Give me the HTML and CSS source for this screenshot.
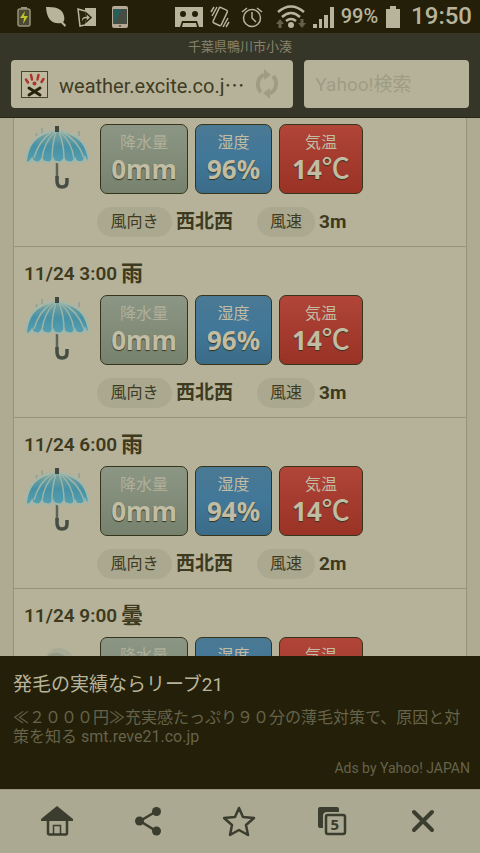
FILE: index.html
```
<!DOCTYPE html>
<html lang="ja">
<head>
<meta charset="utf-8">
<meta name="viewport" content="width=device-width, initial-scale=1">
<title>千葉県鴨川市小湊</title>
<link rel="stylesheet" href="styles.css">
</head>
<body>
<svg class="defs" aria-hidden="true">
  <defs>
    <linearGradient id="canopy" x1="0" y1="0" x2="0" y2="1">
      <stop offset="0" stop-color="#7fa49c"/><stop offset=".5" stop-color="#4791a6"/><stop offset="1" stop-color="#559fb0"/>
    </linearGradient>
    <symbol id="umbrella" viewBox="0 0 66 66">
      <path d="M18 9V4M55 12V7M12 12l1-3" stroke="#8ba098" stroke-width="1.500" fill="none"/>
      <path d="M33 34v21" fill="none" stroke="#5d6359" stroke-width="2.500"/>
      <path d="M33 52v5q0 6 5 6t5-5v-4" fill="none" stroke="#454d45" stroke-width="3.500"/>
      <path d="M2 37Q4 15 22 9q11-4 22 0 19 6 21 28-3 0-4-3-2 5-6 4-3 0-4-3-3 5-7 3-3 0-4-3-3 5-7 3-3 0-4-3-3 5-7 3-3 0-4-3-3 5-6 3-3 0-4-3-3 5-6 3z" fill="url(#canopy)" stroke="#a2b7aa" stroke-width="2"/>
      <path d="M28 8Q15 16 10 34M31 8Q20 18 18 35M32 8Q28 20 28 35M35 8Q40 20 40 35M36 8Q48 18 50 35M38 8Q54 16 60 34" fill="none" stroke="#98b4a8" stroke-width="1.500"/>
      <path d="M31 2h4v6h-4z" fill="#414840"/>
    </symbol>
    <symbol id="cloud" viewBox="0 0 66 66">
      <path d="M12 32q0-11 10-12 4-9 13-9 10 0 14 10 9 2 8 12-1 10-11 10H24q-12 0-12-11z" fill="#a9aa95"/>
      <path d="M20 27q2-12 14-11 9 1 10 12-14-6-24-1z" fill="#979a87"/>
    </symbol>
  </defs>
</svg>

<header class="top">
  <div class="status">
    <div class="status-left">
      <svg width="14" height="22" viewBox="0 0 14 22"><path d="M4 3V1h6v2" fill="#99957c"/><rect x="1" y="3" width="12" height="17" rx="2" fill="#4b4933" stroke="#99957c" stroke-width="1.500"/><path d="M8 5l-5 7h4l-1 6 5-8H7z" fill="#bfc42b"/></svg>
      <svg width="22" height="22" viewBox="0 0 22 22"><path d="M1 1q16-1 18 9 1 5-1 6l3 3-1 2-4-4Q2 19 1 1z" fill="#b8b49b"/></svg>
      <svg width="20" height="22" viewBox="0 0 20 22"><path d="M8 2h11v18H8z" fill="#b8b49b"/><path d="M8 5l-7-2 2 17 5-1" fill="#29250c" stroke="#b8b49b" stroke-width="1.500"/><path d="M4 15q0-5 5-5V7l5 4.500-5 4.500v-3q-3 0-3 3z" fill="#b8b49b" stroke="#29250c" stroke-width="1.500"/></svg>
      <svg width="18" height="24" viewBox="0 0 18 24"><rect x="1" y="1" width="16" height="22" rx="2" fill="#b6a995"/><path d="M2 4h14v15H2z" fill="#454c42"/><path d="M3 19L11 4H2v15z" fill="#285d59"/><circle cx="9" cy="21" r="1" fill="#514c3e"/></svg>
    </div>
    <div class="status-right">
      <svg width="28" height="20" viewBox="0 0 28 20"><path d="M0 0h28v20h-4l-2-6H7l-2 6H0z" fill="#b8b49b"/><path d="M7 20l1-4h13l1 4z" fill="#b8b49b"/><circle cx="8" cy="7" r="3" fill="#242008"/><circle cx="20" cy="7" r="3" fill="#242008"/></svg>
      <svg width="20" height="24" viewBox="0 0 20 24"><g fill="none" stroke="#b8b49b" stroke-width="1.500"><rect x="5.500" y="3" width="9" height="17" rx="1.500" transform="rotate(25 10 12)"/><path d="M7 2L2 11M4 2L1 7M13 22l5-9M16 22l3-5"/></g></svg>
      <svg class="alarm" width="22" height="22" viewBox="0 0 22 22"><g fill="none" stroke="#b8b49b" stroke-width="1.500"><circle cx="11" cy="12" r="8.500"/><path d="M11 6v6l4 4M1 6l5-4M21 6l-5-4"/></g></svg>
      <svg class="wifi" width="30" height="24" viewBox="0 0 30 24"><g fill="none" stroke="#b8b49b" stroke-width="2.500"><path d="M2 7q13-11 26 0M6 12q9-8 18 0M10 16q5-4 10 0"/></g><circle cx="15" cy="20" r="3" fill="#b8b49b"/><path d="M4 14l4 5H5.500v4h-3v-4H0zM26 23l4-5h-2.500v-4h-3v4H22z" fill="#64604a"/></svg>
      <svg width="21" height="22" viewBox="0 0 21 22"><path d="M0 18h4v4H0zM6 13h3v9H6zM11 9h4v13h-4zM17 1h4v21h-4z" fill="#b8b49b"/></svg>
      <span class="percent">99%</span>
      <svg width="16" height="24" viewBox="0 0 16 24"><path d="M5 1h6v3h4v19H1V4h4z" fill="#b8b49b"/></svg>
      <span class="clock">19:50</span>
    </div>
  </div>
  <div class="page-title">千葉県鴨川市小湊</div>
  <div class="bars">
    <div class="url-bar">
      <svg width="27" height="27" viewBox="0 0 27 27"><rect x=".5" y=".5" width="26" height="26" fill="#bfb99f" stroke="#47462b"/><path d="M5 8.500l2 3M10 4l1 4.500M17.500 4l-1 4.500M22.500 8l-2 3" stroke="#ab352b" stroke-width="2.500" stroke-linecap="round"/><circle cx="13.500" cy="12.500" r="2" fill="#ab352b"/><path d="M8 17l11 7M19 17L8 24" stroke="#27240c" stroke-width="3" stroke-linecap="round"/></svg>
      <input class="url" type="text" aria-label="URL" value="weather.excite.co.j⋯">
      <button class="reload" type="button" aria-label="再読み込み"><svg width="26" height="32" viewBox="0 0 26 32"><g fill="none" stroke="#9f9c84" stroke-width="4"><path d="M7 24A11 11 0 0 1 10 6.500"/><path d="M19 8A11 11 0 0 1 16 25.500"/></g><path d="M10 1l7 6-7 5zM16 31l-7-6 7-5z" fill="#9f9c84"/></svg></button>
    </div>
    <input class="search" type="search" aria-label="Yahoo!検索" placeholder="Yahoo!検索">
  </div>
</header>

<main class="page">
  <div class="list">
    <article class="entry first">
      <div class="detail"><svg class="sky"><use href="#umbrella"/></svg>
        <div class="cards"><div class="card rain"><span>降水量</span><b>0mm</b></div><div class="card humid"><span>湿度</span><b>96%</b></div><div class="card temp"><span>気温</span><b>14<i>℃</i></b></div></div></div>
      <div class="wind"><span class="pill dir">風向き</span><b class="from">西北西</b><span class="pill">風速</span><b>3m</b></div>
    </article>
    <article class="entry">
      <h2>11/24 3:00 <em>雨</em></h2>
      <div class="detail"><svg class="sky"><use href="#umbrella"/></svg>
        <div class="cards"><div class="card rain"><span>降水量</span><b>0mm</b></div><div class="card humid"><span>湿度</span><b>96%</b></div><div class="card temp"><span>気温</span><b>14<i>℃</i></b></div></div></div>
      <div class="wind"><span class="pill dir">風向き</span><b class="from">西北西</b><span class="pill">風速</span><b>3m</b></div>
    </article>
    <article class="entry">
      <h2>11/24 6:00 <em>雨</em></h2>
      <div class="detail"><svg class="sky"><use href="#umbrella"/></svg>
        <div class="cards"><div class="card rain"><span>降水量</span><b>0mm</b></div><div class="card humid"><span>湿度</span><b>94%</b></div><div class="card temp"><span>気温</span><b>14<i>℃</i></b></div></div></div>
      <div class="wind"><span class="pill dir">風向き</span><b class="from">西北西</b><span class="pill">風速</span><b>2m</b></div>
    </article>
    <article class="entry">
      <h2>11/24 9:00 <em>曇</em></h2>
      <div class="detail"><svg class="sky"><use href="#cloud"/></svg>
        <div class="cards"><div class="card rain"><span>降水量</span></div><div class="card humid"><span>湿度</span></div><div class="card temp"><span>気温</span></div></div></div>
    </article>
  </div>
</main>

<aside class="ad">
  <a href="#ad" class="ad-title">発毛の実績ならリーブ21</a>
  <p>≪２０００円≫充実感たっぷり９０分の薄毛対策で、原因と対策を知る smt.reve21.co.jp</p>
  <small>Ads by Yahoo! JAPAN</small>
</aside>

<nav class="tools">
  <button type="button" aria-label="ホーム"><svg width="34" height="34" viewBox="0 0 34 34"><path d="M17 1l16 13v2H1v-2z" fill="#3b3d2e"/><path d="M8 15v13q0 1.500 1.500 1.500h16q1.500 0 1.500-1.500V15" fill="none" stroke="#3b3d2e" stroke-width="2.500"/><path d="M13.500 29v-8.500h7V29" fill="none" stroke="#3b3d2e" stroke-width="1.500"/></svg></button>
  <button type="button" aria-label="共有"><svg width="28" height="32" viewBox="0 0 28 32"><path d="M22 5.500L6 15l16 10" fill="none" stroke="#3b3d2e" stroke-width="2.500"/><g fill="#3b3d2e"><circle cx="22.500" cy="5.500" r="4.500"/><circle cx="5.500" cy="15" r="4.500"/><circle cx="22.500" cy="25" r="4.500"/></g></svg></button>
  <button type="button" aria-label="お気に入り"><svg width="34" height="34" viewBox="0 0 34 34"><path d="M16 3l4 9 11 1-8 7 2 10-9-5-9 5 2-10-8-7 11-1z" fill="none" stroke="#3b3d2e" stroke-width="2.500" stroke-linejoin="round"/></svg></button>
  <button type="button" class="tabs" aria-label="タブ"><svg width="30" height="32" viewBox="0 0 30 32"><path d="M3 1h17q2 0 2 2v3H10q-4 0-4 4v12H3q-2 0-2-2V3q0-2 2-2z" fill="#3b3d2e"/><rect x="9" y="9" width="19" height="19" rx="2" fill="none" stroke="#3b3d2e" stroke-width="2.500"/></svg><span>5</span></button>
  <button type="button" aria-label="閉じる"><svg width="24" height="26" viewBox="0 0 24 26"><path d="M3 3l18 18M21 3L3 21" stroke="#3b3d2e" stroke-width="4" stroke-linecap="round"/></svg></button>
</nav>
</body>
</html>
```
FILE: styles.css
```
* { box-sizing: border-box; }
body {
  margin: 0;
  height: 100vh;
  display: flex;
  flex-direction: column;
  overflow: hidden;
  background: #b5b299;
  color: #3d3a20;
  font-family: Roboto, "Noto Sans CJK JP", sans-serif;
}
svg { display: block; flex: none; }
button, input { border: 0; padding: 0; margin: 0; background: none; font: inherit; color: inherit; }
.defs { position: absolute; width: 0; height: 0; }

.top { flex: none; background: #363628; border-bottom: 1px solid #28260f; }
.status {
  display: flex;
  justify-content: space-between;
  align-items: center;
  height: 33px;
  padding: 0 8px 0 17px;
  background: #231f08;
  color: #b8b49b;
}
.status-left { display: flex; align-items: center; gap: 10px; }
.status-left svg:first-child { margin-right: 4px; }
.status-left svg:last-child { margin-left: 4px; }
.status-right { display: flex; align-items: center; gap: 7px; }
.alarm { margin: 0 6px 0 4px; }
.percent { font-size: 20px; line-height: 33px; font-weight: 500; }
.clock { font-size: 24px; line-height: 33px; font-weight: 500; margin-left: 3px; }
.page-title { height: 27px; font-size: 13px; line-height: 27px; text-align: center; color: #858269; }
.bars { display: grid; grid-template-columns: 283fr 165fr; gap: 11px; padding: 0 11px 9px; }
.url-bar, .search { width: 100%; min-width: 0; height: 48px; border-radius: 4px; background: #b6b299; }
.url-bar { display: flex; align-items: center; gap: 11px; padding: 0 13px 0 10px; }
.url { flex: 1; min-width: 0; font-size: 20px; color: #3f3c24; }
.search { padding: 0 11px; font-size: 19px; appearance: none; }
.search::placeholder { color: #9f9c84; opacity: 1; }

.page { flex: 1; min-height: 0; overflow: hidden; padding: 0 13px; background: #aeab92; }
.list { min-height: 100%; background: #b5b299; border: solid #96937a; border-width: 0 1px; }
.entry { border-bottom: 1px solid #96937a; padding-bottom: 9px; }
.entry.first { padding-top: 6px; }
.entry h2 { display: flex; align-items: center; gap: 4px; height: 48px; margin: 0; padding: 5px 0 0 10px; font-size: 19px; line-height: 43px; font-weight: 600; }
.entry em { font-style: normal; font-size: 22px; font-weight: 700; }
.detail { display: flex; gap: 10px; padding-left: 10px; }
.sky { width: 66px; height: 66px; }
.cards { display: flex; gap: 7px; }
.card {
  height: 70px;
  padding: 6px 0 0;
  border: 1px solid #37341c;
  border-radius: 7px;
  text-align: center;
  color: #c1bda4;
}
.card span { display: block; font-size: 16px; line-height: 24px; }
.card b { display: block; height: 29px; font: 700 26px/29px "Noto Sans", sans-serif; text-shadow: 0 1px 1px #37341c; }
.card i { font: 500 28px/20px "Noto Sans CJK JP", sans-serif; }
.rain { width: 88px; background: linear-gradient(#8c9684, #77826e); }
.rain span { color: #b0af9a; }
.humid { width: 77px; background: linear-gradient(#4a7993, #417799 50%, #3b6c88); }
.temp { width: 84px; background: linear-gradient(#b04538, #9a3226); }
.wind { display: flex; align-items: center; height: 30px; margin-top: 13px; padding-left: 83px; font-size: 19px; line-height: 30px; }
.pill { width: 58px; border-radius: 15px; background: #aba890; font-size: 16px; text-align: center; }
.pill.dir { width: 75px; }
.wind b { margin-left: 4px; }
.wind .from { margin-right: 24px; }

.ad { flex: none; display: flex; flex-direction: column; height: 133px; padding: 14px 10px 13px 13px; background: #231f08; color: #66634b; }
.ad-title { font-size: 19px; line-height: 30px; color: #b8b49b; text-decoration: none; }
.ad p { margin: 8px 0 0; font-size: 16px; line-height: 19px; }
.ad small { margin-top: auto; font-size: 14px; line-height: 16px; text-align: right; }

.tools { flex: none; display: flex; height: 64px; padding: 0 11px; border-top: 1px solid #99967d; background: #aba991; }
.tools button { flex: 1; display: flex; align-items: center; justify-content: center; position: relative; }
.tabs span { position: absolute; top: 25px; left: 50%; margin-left: -1px; font: 700 15px/18px "Noto Sans", sans-serif; color: #3b3d2e; }
```
